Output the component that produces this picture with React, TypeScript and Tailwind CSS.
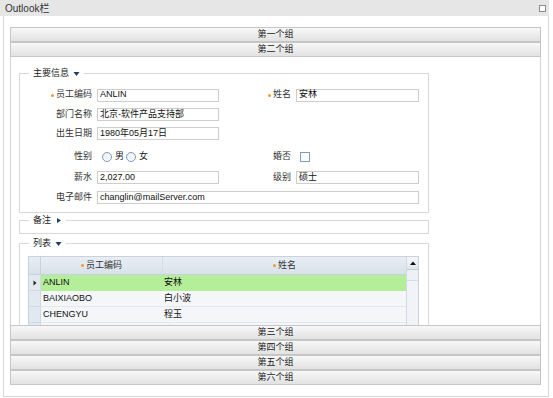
import type { ReactNode } from "react";

const font = "font-['Liberation_Sans','Noto_Sans_CJK_SC',sans-serif]";

function Header({ title }: { title: string }) {
  return (
    <div className="flex h-[15px] items-center justify-center border border-[#c6c6c6] bg-gradient-to-b from-[#f8f8f8] to-[#e2e2e2] text-[#222]">
      {title}
    </div>
  );
}

function Tri({ right = false }: { right?: boolean }) {
  return (
    <svg width="7" height="7" viewBox="0 0 7 7" className="ml-[4px] inline-block">
      {right ? (
        <path d="M2 1 L6 3.5 L2 6 Z" fill="#1d3f63" />
      ) : (
        <path d="M0.5 2 L6.5 2 L3.5 6 Z" fill="#1d3f63" />
      )}
    </svg>
  );
}

function Legend({ text, right }: { text: string; right?: boolean }) {
  return (
    <legend className="ml-[9px] flex h-[14px] items-center px-[4px] leading-[14px] text-[#222]">
      {text}
      <Tri right={right} />
    </legend>
  );
}

function Label({ children, req = false }: { children: ReactNode; req?: boolean }) {
  return (
    <div className="flex w-[72px] shrink-0 items-center justify-end text-[#333]">
      {req ? <span className="mr-[2px] inline-block h-[3px] w-[3px] rounded-full bg-[#f39a32]" /> : null}
      {children}
    </div>
  );
}

function Input({ value, w }: { value: string; w: string }) {
  return (
    <div className={`ml-[5px] flex h-[13px] items-center border border-[#cdcdcd] bg-white pl-[2px] text-[#111] ${w}`}>
      {value}
    </div>
  );
}

function Radio({ label }: { label: string }) {
  return (
    <span className="flex items-center">
      <span className="mr-[3px] inline-block h-[10px] w-[10px] rounded-full border border-[#7f9db9] bg-gradient-to-br from-[#e8edf3] to-white" />
      <span className="mr-[2px]">{label}</span>
    </span>
  );
}

const rows = [
  ["ANLIN", "安林"],
  ["BAIXIAOBO", "白小波"],
  ["CHENGYU", "程玉"],
  ["CHENCHEN", "陈晨"]
];

export default function App() {
  return (
    <div className={`h-[398px] w-[553px] overflow-hidden bg-white text-[9px] ${font}`}>
      <div className="flex h-[16px] w-[549px] items-center justify-between bg-[#e6e6e6] pl-[5px] pr-[3px] text-[10px] text-[#333]">
        <span>Outlook栏</span>
        <span className="inline-block h-[7px] w-[7px] border border-[#8c8c8c] bg-white" />
      </div>
      <div className="ml-[3px] flex h-[381px] w-[546px] flex-col border-x border-b border-[#d6d6d6] pl-[6px] pr-[7px] pt-[11px]">
        <Header title="第一个组" />
        <Header title="第二个组" />
        <div className="h-[268px] overflow-hidden border-x border-[#d4d4d4] bg-white pl-[8px]">
          <fieldset className="mt-[9px] w-[410px] border border-[#d8d8d8] px-0 pb-[2px]">
            <Legend text="主要信息" />
            <div className="flex flex-col pt-[5px]">
              <div className="flex h-[20px] items-center">
                <Label req>员工编码</Label>
                <Input value="ANLIN" w="w-[122px]" />
                <Label req>姓名</Label>
                <Input value="安林" w="w-[123px]" />
              </div>
              <div className="flex h-[19px] items-center">
                <Label>部门名称</Label>
                <Input value="北京-软件产品支持部" w="w-[122px]" />
              </div>
              <div className="flex h-[19px] items-center">
                <Label>出生日期</Label>
                <Input value="1980年05月17日" w="w-[122px]" />
              </div>
              <div className="flex h-[27px] items-center">
                <Label>性别</Label>
                <div className="ml-[10px] flex w-[117px] items-center text-[#222]">
                  <Radio label="男" />
                  <Radio label="女" />
                </div>
                <Label>婚否</Label>
                <span className="ml-[9px] inline-block h-[10px] w-[10px] border border-[#7f9db9] bg-white" />
              </div>
              <div className="flex h-[15px] items-center">
                <Label>薪水</Label>
                <Input value="2,027.00" w="w-[122px]" />
                <Label>级别</Label>
                <Input value="硕士" w="w-[123px]" />
              </div>
              <div className="flex h-[25px] items-center">
                <Label>电子邮件</Label>
                <Input value="changlin@mailServer.com" w="w-[322px]" />
              </div>
            </div>
          </fieldset>
          <fieldset className="w-[410px] border border-[#d8d8d8] px-0">
            <Legend text="备注" right />
            <div className="h-[6px]" />
          </fieldset>
          <fieldset className="mt-[2px] w-[410px] border border-[#d8d8d8] px-0">
            <Legend text="列表" />
            <div className="pl-[8px] pt-[6px]">
              <div className="flex w-[391px] border border-[#c8d2de]">
                <div className="flex w-[377px] flex-col">
                  <div className="flex h-[18px] border-b border-[#c8d2de] bg-gradient-to-b from-[#e9eef4] to-[#d8e1eb] text-[#333]">
                    <div className="w-[12px] border-r border-[#c8d2de]" />
                    <div className="flex w-[122px] items-center justify-center border-r border-[#d5dde7]">
                      <span className="mr-[2px] inline-block h-[3px] w-[3px] rounded-full bg-[#f39a32]" />
                      员工编码
                    </div>
                    <div className="flex flex-1 items-center justify-center">
                      <span className="mr-[2px] inline-block h-[3px] w-[3px] rounded-full bg-[#f39a32]" />
                      姓名
                    </div>
                  </div>
                  {rows.map(([code, name], i) => (
                    <div key={code} className="flex h-[16px]">
                      <div className="flex w-[12px] items-center justify-center border-r border-b border-[#d0d9e4] bg-[#e2e8f0]">
                        {i === 0 ? (
                          <svg width="4" height="6" viewBox="0 0 4 6">
                            <path d="M0.5 0.5 L3.5 3 L0.5 5.5 Z" fill="#222" />
                          </svg>
                        ) : null}
                      </div>
                      <div
                        className={`flex flex-1 border-b ${
                          i === 0 ? "border-[#b4ee98] bg-[#b4ee98]" : "border-[#e3e8ef] bg-[#f4f6fa]"
                        }`}
                      >
                        <div className="flex w-[122px] items-center pl-[2px] text-[#111]">{code}</div>
                        <div className="flex flex-1 items-center pl-[1px] text-[#111]">{name}</div>
                      </div>
                    </div>
                  ))}
                </div>
                <div className="flex w-[12px] flex-col border-l border-[#d0d9e4] bg-[#f1f3f7]">
                  <div className="flex h-[13px] items-center justify-center border-b border-[#c4ccd6] bg-gradient-to-b from-[#f6f7f9] to-[#e2e6ec]">
                    <svg width="6" height="4" viewBox="0 0 6 4">
                      <path d="M0 4 L3 0.5 L6 4 Z" fill="#111" />
                    </svg>
                  </div>
                  <div className="h-[11px] border-b border-[#d4dbe4] bg-[#edf0f4]" />
                </div>
              </div>
            </div>
          </fieldset>
        </div>
        <Header title="第三个组" />
        <Header title="第四个组" />
        <Header title="第五个组" />
        <Header title="第六个组" />
      </div>
    </div>
  );
}
